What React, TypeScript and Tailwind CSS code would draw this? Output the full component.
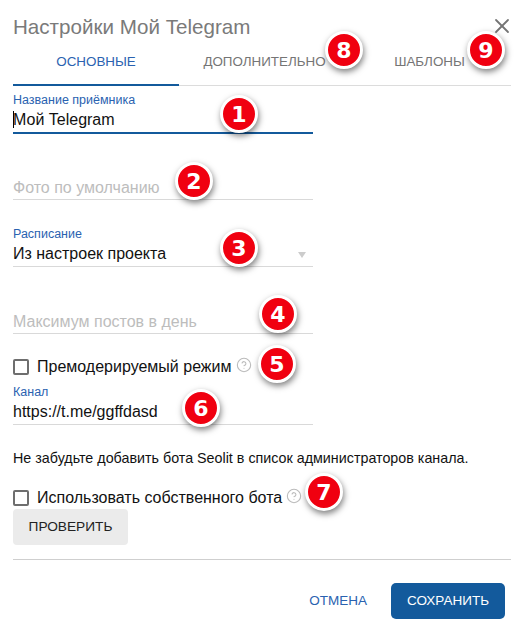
import React from 'react';
import { X, CircleHelp } from 'lucide-react';

const BLUE = 'text-[#2a62b0]';

const Badge = ({ n, className }: { n: number; className: string }) => (
  <div
    className={`absolute w-[38px] h-[38px] rounded-full bg-[#f00010] border-[3px] border-white shadow-[1px_3px_6px_rgba(0,0,0,0.5)] flex items-center justify-center text-white text-[22px] font-bold font-['DejaVu_Sans',sans-serif] ${className}`}
  >
    {n}
  </div>
);

const Field = ({
  label,
  value,
  placeholder,
  active,
  className,
  children,
}: {
  label?: string;
  value?: string;
  placeholder?: string;
  active?: boolean;
  className?: string;
  children?: React.ReactNode;
}) => (
  <div className={`w-[300px] flex flex-col ${className ?? ''}`}>
    {label && <label className={`text-[12.5px] leading-[14px] ${BLUE}`}>{label}</label>}
    <div
      className={`relative h-[26px] flex items-center text-[16px] ${
        active ? 'border-b-2 border-[#135a9c] h-[27px]' : 'border-b border-[#d9d9d9]'
      }`}
    >
      {active && <span className="w-px h-[17px] bg-black -mr-px" />}
      {value && <span className="text-[#111]">{value}</span>}
      {placeholder && <span className="pt-[2px] text-[#bdbdbd]">{placeholder}</span>}
      {children}
    </div>
  </div>
);

const CheckRow = ({ label, className }: { label: string; className?: string }) => (
  <div className={`flex items-center h-[24px] ${className ?? ''}`}>
    <span className="w-[16px] h-[16px] rounded-[2px] border-2 border-[#6e6e6e]" />
    <span className="ml-[8px] text-[16px] text-[#111]">{label}</span>
    <CircleHelp size={16} strokeWidth={1.6} className="ml-[4px] -mt-[4px] text-[#bbbbbb]" />
  </div>
);

export default function App() {
  return (
    <div className="relative w-[525px] h-[640px] bg-white px-[13px] pt-[10px] font-['Liberation_Sans',sans-serif] overflow-hidden">
      <div className="flex items-center justify-between h-[34px] -mr-[2px]">
        <h2 className="text-[20.6px] text-[#7a7a7a]">Настройки Мой Telegram</h2>
        <X size={24} strokeWidth={1.8} className="text-[#757575] -mt-[2px]" />
      </div>

      <div className="grid grid-cols-3 w-[498px] h-[42px] border-b border-[#dcdcdc] text-[13.4px]">
        <div className={`h-[42px] pt-[8px] text-center border-b-2 border-[#135a9c] ${BLUE}`}>ОСНОВНЫЕ</div>
        <div className="pt-[8px] pl-[5px] text-center text-[#757575]">ДОПОЛНИТЕЛЬНО</div>
        <div className="pt-[8px] pl-[3px] text-center text-[#757575]">ШАБЛОНЫ</div>
      </div>

      <Field label="Название приёмника" value="Мой Telegram" active className="mt-[7px]" />
      <Field placeholder="Фото по умолчанию" className="mt-[40px]" />
      <Field label="Расписание" value="Из настроек проекта" className="mt-[27px]">
        <span className="absolute right-[7px] top-[11px] border-x-[4px] border-t-[6px] border-x-transparent border-t-[#cccccc]" />
      </Field>
      <Field placeholder="Максимум постов в день" className="mt-[41px]" />
      <CheckRow label="Премодерируемый режим" className="mt-[21px]" />
      <Field label="Канал" value="https://t.me/ggffdasd" className="mt-[6px]" />

      <p className="mt-[25px] text-[14.3px] leading-[16px] text-[#111]">
        Не забудьте добавить бота Seolit в список администраторов канала.
      </p>

      <CheckRow label="Использовать собственного бота" className="mt-[20px]" />
      <button className="block -mt-[1px] w-[115px] h-[36px] rounded-[4px] bg-[#ebebeb] text-[13.7px] text-[#222]">
        ПРОВЕРИТЬ
      </button>

      <div className="mt-[14px] w-[498px] border-t border-[#cfcfcf]" />

      <div className="flex items-center justify-end w-[492px] mt-[23px] gap-[24px]">
        <button className={`text-[13.5px] ${BLUE}`}>ОТМЕНА</button>
        <button className="w-[114px] h-[36px] rounded-[5px] bg-[#135a9c] text-white text-[13.5px]">СОХРАНИТЬ</button>
      </div>

      <Badge n={1} className="left-[220px] top-[95px]" />
      <Badge n={2} className="left-[175px] top-[162px]" />
      <Badge n={3} className="left-[220px] top-[229px]" />
      <Badge n={4} className="left-[259px] top-[295px]" />
      <Badge n={5} className="left-[258px] top-[345px]" />
      <Badge n={6} className="left-[182px] top-[389px]" />
      <Badge n={7} className="left-[305px] top-[473px]" />
      <Badge n={8} className="left-[325px] top-[31px]" />
      <Badge n={9} className="left-[467px] top-[31px]" />
    </div>
  );
}
